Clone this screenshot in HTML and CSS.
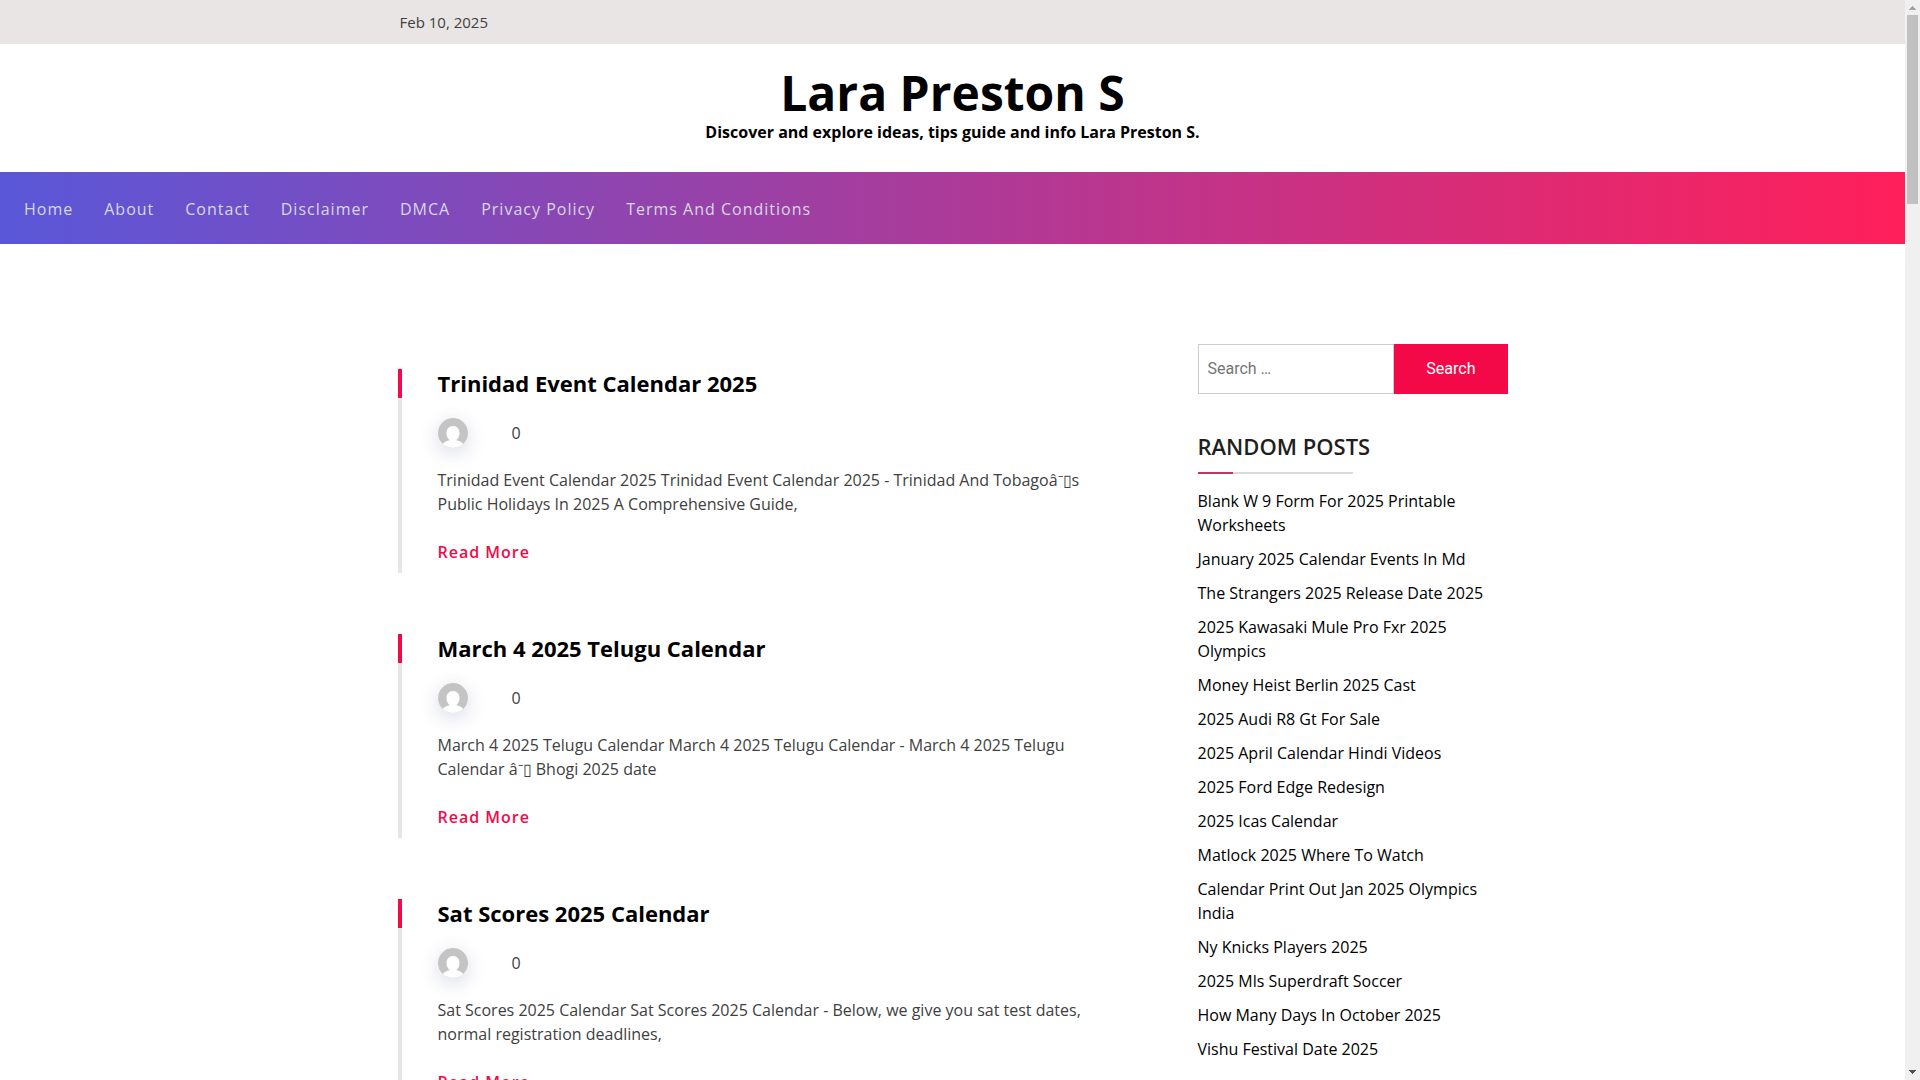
FILE: index.html
```
<!DOCTYPE html>
<html lang="en">
<head>
    <meta charset="UTF-8">
    <meta name="viewport" content="width=device-width, initial-scale=1.0">
    <title>Lara Preston S</title>
    <link rel="stylesheet" href="styles.css">
</head>
<body>
    <svg class="sprite" aria-hidden="true">
        <symbol id="avatar" viewBox="0 0 30 30">
            <rect width="30" height="30" fill="#c4c4c4"/>
            <path d="M15 8c4 0 6.500 3 6.500 7.200 0 3-1.500 5.500-3.300 7 3 .5 5.500 1.800 7.300 3.800V30h-21v-4c1.800-2 4.300-3.300 7.300-3.800-1.800-1.500-3.300-4-3.300-7C8.500 11 11 8 15 8z" fill="#fff"/>
        </symbol>
    </svg>

    <div class="top-bar">
        <div class="container">Feb 10, 2025</div>
    </div>

    <header class="site-header">
        <h1 class="site-title"><a href="#">Lara Preston S</a></h1>
        <p class="site-description">Discover and explore ideas, tips guide and info Lara Preston S.</p>
    </header>

    <nav class="main-nav">
        <a href="#">Home</a>
        <a href="#">About</a>
        <a href="#">Contact</a>
        <a href="#">Disclaimer</a>
        <a href="#">DMCA</a>
        <a href="#">Privacy Policy</a>
        <a href="#">Terms And Conditions</a>
    </nav>

    <div class="container content">
        <main class="posts">
            <article class="post">
                <h2><a href="#">Trinidad Event Calendar 2025</a></h2>
                <div class="meta">
                    <svg class="avatar"><use href="#avatar"/></svg>
                    <span>0</span>
                </div>
                <p>Trinidad Event Calendar 2025 Trinidad Event Calendar 2025 - Trinidad And Tobagoâ⁻▯s Public Holidays In 2025 A Comprehensive Guide,</p>
                <a class="read-more" href="#">Read More</a>
            </article>
            <article class="post">
                <h2><a href="#">March 4 2025 Telugu Calendar</a></h2>
                <div class="meta">
                    <svg class="avatar"><use href="#avatar"/></svg>
                    <span>0</span>
                </div>
                <p>March 4 2025 Telugu Calendar March 4 2025 Telugu Calendar - March 4 2025 Telugu Calendar â⁻▯ Bhogi 2025 date</p>
                <a class="read-more" href="#">Read More</a>
            </article>
            <article class="post">
                <h2><a href="#">Sat Scores 2025 Calendar</a></h2>
                <div class="meta">
                    <svg class="avatar"><use href="#avatar"/></svg>
                    <span>0</span>
                </div>
                <p>Sat Scores 2025 Calendar Sat Scores 2025 Calendar - Below, we give you sat test dates, normal registration deadlines,</p>
                <a class="read-more" href="#">Read More</a>
            </article>
        </main>

        <aside class="sidebar">
            <form class="search-form">
                <input type="search" placeholder="Search …" aria-label="Search for">
                <button type="submit">Search</button>
            </form>
            <h2 class="widget-title">Random Posts</h2>
            <ul class="widget-list">
                <li><a href="#">Blank W 9 Form For 2025 Printable Worksheets</a></li>
                <li><a href="#">January 2025 Calendar Events In Md</a></li>
                <li><a href="#">The Strangers 2025 Release Date 2025</a></li>
                <li><a href="#">2025 Kawasaki Mule Pro Fxr 2025 Olympics</a></li>
                <li><a href="#">Money Heist Berlin 2025 Cast</a></li>
                <li><a href="#">2025 Audi R8 Gt For Sale</a></li>
                <li><a href="#">2025 April Calendar Hindi Videos</a></li>
                <li><a href="#">2025 Ford Edge Redesign</a></li>
                <li><a href="#">2025 Icas Calendar</a></li>
                <li><a href="#">Matlock 2025 Where To Watch</a></li>
                <li><a href="#">Calendar Print Out Jan 2025 Olympics India</a></li>
                <li><a href="#">Ny Knicks Players 2025</a></li>
                <li><a href="#">2025 Mls Superdraft Soccer</a></li>
                <li><a href="#">How Many Days In October 2025</a></li>
                <li><a href="#">Vishu Festival Date 2025</a></li>
            </ul>
        </aside>
    </div>

    <div class="scrollbar" aria-hidden="true">
        <svg width="15" height="15" viewBox="0 0 15 15" shape-rendering="crispEdges"><path d="M7 6h1v1h1v1h1v1h1v1H4V9h1V8h1V7h1z" fill="#a3a3a3"/></svg>
        <div class="scrollbar-track"><div class="scrollbar-thumb"></div></div>
        <svg width="15" height="15" viewBox="0 0 15 15" shape-rendering="crispEdges"><path d="M4 5h7v1h-1v1H9v1H8v1H7V8H6V7H5V6H4z" fill="#505050"/></svg>
    </div>
</body>
</html>
```
FILE: styles.css
```
* {
    box-sizing: border-box;
}

html {
    overflow: hidden;
}

body {
    margin: 0;
    padding-right: 15px;
    font-family: "Open Sans", sans-serif;
    font-size: 16px;
    line-height: 24px;
    color: #404040;
    background: #fff;
}

a {
    color: inherit;
    text-decoration: none;
}

h1, h2, p, ul {
    margin: 0;
    padding: 0;
}

.sprite {
    display: none;
}

.container {
    max-width: 1140px;
    margin: 0 auto;
    padding: 0 15px;
}

.top-bar {
    padding: 10px 0;
    font-size: 15px;
    background: #e9e5e4;
}

.top-bar .container {
    padding: 0 17px;
}

.site-header {
    padding: 22px 15px 28px;
    text-align: center;
    color: #000;
}

.site-title {
    font-size: 48px;
    line-height: 54px;
    font-weight: 700;
}

.site-description {
    font-weight: 700;
}

.main-nav {
    display: flex;
    gap: 31px;
    padding: 25px 24px 23px;
    font-weight: 500;
    letter-spacing: 1px;
    color: #d6d8e2;
    background: linear-gradient(to right, #5957d8, #ff1f5a);
}

.content {
    display: flex;
    justify-content: space-between;
    padding-top: 100px;
}

.posts {
    display: flex;
    flex-direction: column;
    gap: 61px;
    width: 700px;
    padding-top: 25px;
}

.post {
    padding: 0 0 9px 36px;
    border-left: 4px solid;
    border-image: linear-gradient(#f30948 29px, #e6e6e6 29px) 0 0 0 4;
}

.post h2 {
    font-size: 22px;
    line-height: 29px;
    font-weight: 700;
    color: #000;
}

.meta {
    display: flex;
    align-items: center;
    gap: 44px;
    margin: 20px 0;
}

.avatar {
    width: 30px;
    height: 30px;
    border-radius: 50%;
    box-shadow: 0 5px 20px rgba(60, 70, 130, 0.2);
}

.read-more {
    display: inline-block;
    margin-top: 24px;
    font-weight: 600;
    letter-spacing: 1px;
    color: #f30948;
}

.sidebar {
    width: 310px;
}

.search-form {
    display: flex;
    height: 50px;
}

.search-form input,
.search-form button {
    font-family: Roboto, sans-serif;
    font-size: 16px;
    border: 1px solid #ccc;
    border-radius: 0;
}

.search-form input {
    flex: 1;
    min-width: 0;
    padding: 0 9px 2px;
    color: #666;
    outline: none;
    appearance: none;
}

.search-form button {
    padding: 0 31px 2px;
    color: #fff;
    background: #f30948;
    border-color: #f30948;
    cursor: pointer;
}

.widget-title {
    margin: 36px 0 15px;
    font-size: 22px;
    line-height: 32px;
    font-weight: 600;
    text-transform: uppercase;
    color: #1f1f1f;
}

.widget-title::after {
    content: "";
    display: block;
    width: 50%;
    height: 2px;
    margin-top: 10px;
    background: linear-gradient(to right, #d42a67 35px, #d9d9d9 35px);
}

.widget-list {
    display: flex;
    flex-direction: column;
    gap: 10px;
    list-style: none;
    color: #000;
}

.scrollbar {
    position: fixed;
    top: 0;
    right: 0;
    bottom: 0;
    display: flex;
    flex-direction: column;
    width: 15px;
    background: #f0f0f0;
}

.scrollbar-track {
    flex: 1;
    padding: 0 2px;
}

.scrollbar-thumb {
    height: 18%;
    background: #c1c1c1;
}
```
